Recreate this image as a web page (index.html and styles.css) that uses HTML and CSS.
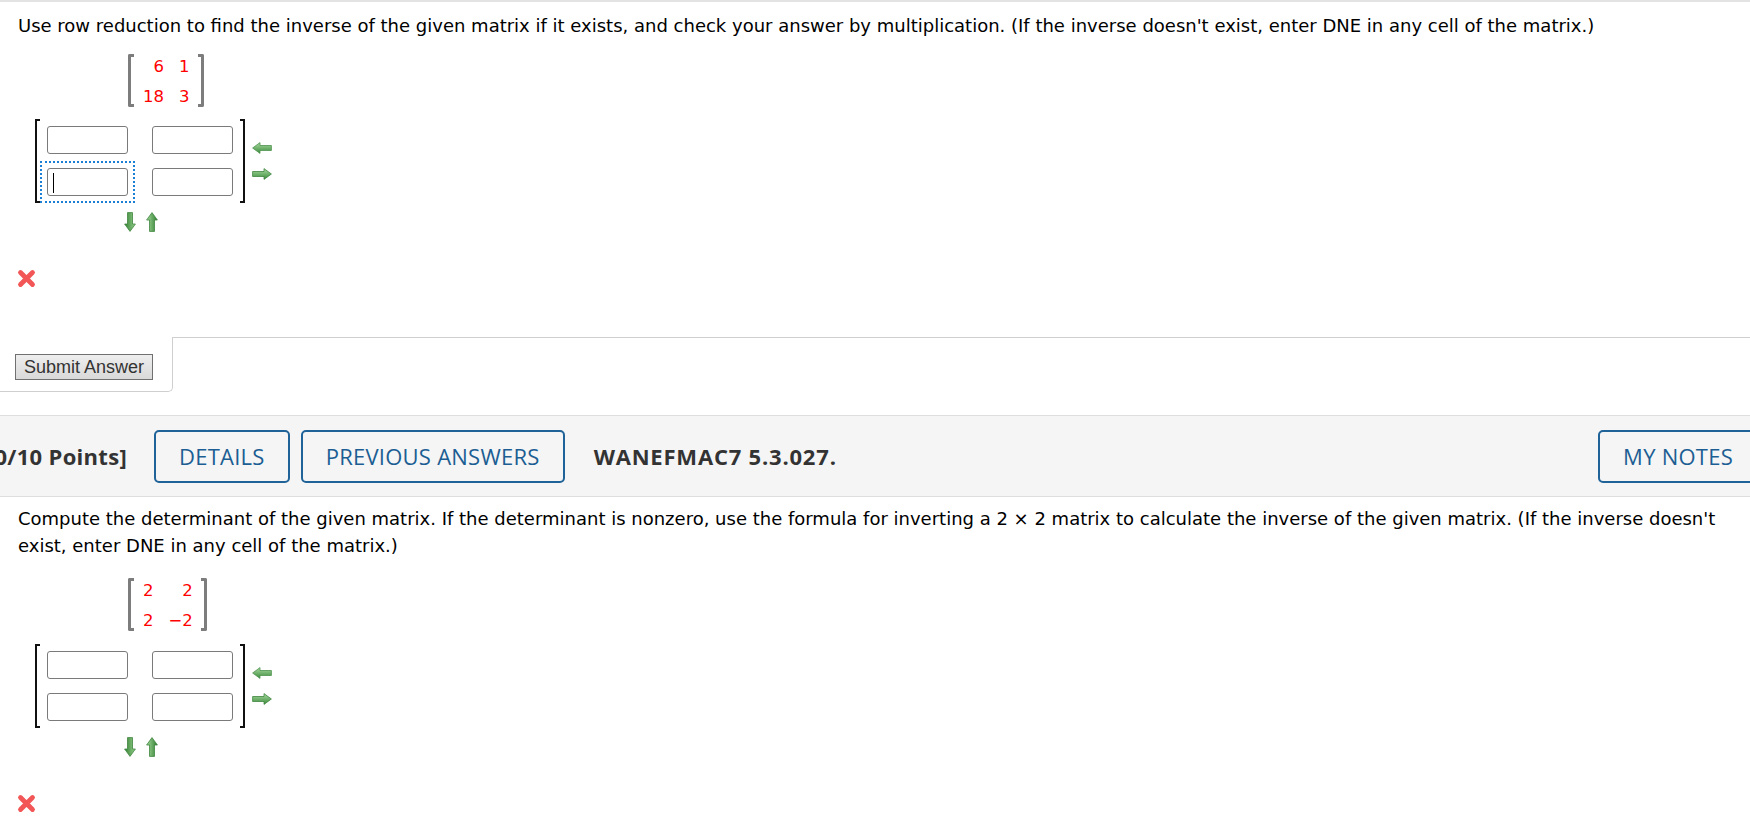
FILE: index.html
```html
<!DOCTYPE html>
<html lang="en">
<head>
  <meta charset="UTF-8" />
  <title>WebAssign – Matrix Inverses</title>
  <link rel="stylesheet" href="styles.css">
</head>
<body>
  <svg class="defs" aria-hidden="true">
    <defs>
      <linearGradient id="gv" x1="0" y1="0" x2="0" y2="1">
        <stop offset="0" stop-color="#a9dba1"/>
        <stop offset="1" stop-color="#3b8b3b"/>
      </linearGradient>
      <linearGradient id="gdown" x1="0" y1="0" x2="1" y2="0">
        <stop offset="0" stop-color="#327f32"/>
        <stop offset="1" stop-color="#98d28f"/>
      </linearGradient>
      <linearGradient id="gup" x1="0" y1="0" x2="1" y2="0">
        <stop offset="0" stop-color="#a2d899"/>
        <stop offset="1" stop-color="#327f32"/>
      </linearGradient>
    </defs>
  </svg>

  <div class="topline"></div>

  <section class="question">
    <p class="prompt">Use row reduction to find the inverse of the given matrix if it exists, and check your answer by multiplication. (If the inverse doesn't exist, enter DNE in any cell of the matrix.)</p>

    <div class="given">
      <span class="br"></span>
      <div class="vals">
        <span>6</span><span>1</span>
        <span>18</span><span>3</span>
      </div>
      <span class="br r"></span>
    </div>

    <div class="answer-row">
      <div class="answer">
        <span class="abr"></span>
        <div class="cells">
          <div class="cell"><input type="text"></div>
          <div class="cell"><input type="text"></div>
          <div class="cell focus"><input type="text"><span class="caret"></span></div>
          <div class="cell"><input type="text"></div>
        </div>
        <span class="abr r"></span>
      </div>
      <div class="row-arrows">
        <svg width="20" height="12" viewBox="0 0 20 12"><path d="M0.6 6 L8 0.6 V3.5 H19.4 V8.5 H8 V11.4 Z" fill="url(#gv)" stroke="#4f934f" stroke-width="0.8"/></svg>
        <svg width="20" height="12" viewBox="0 0 20 12"><path d="M19.4 6 L12 0.6 V3.5 H0.6 V8.5 H12 V11.4 Z" fill="url(#gv)" stroke="#3f853f" stroke-width="0.8"/></svg>
      </div>
    </div>

    <div class="col-arrows">
      <svg width="12" height="20" viewBox="0 0 12 20"><path d="M3.5 0.6 H8.5 V12 H11.4 L6 19.4 L0.6 12 H3.5 Z" fill="url(#gdown)" stroke="#3f853f" stroke-width="0.8"/></svg>
      <svg width="12" height="20" viewBox="0 0 12 20"><path d="M3.5 19.4 H8.5 V8 H11.4 L6 0.6 L0.6 8 H3.5 Z" fill="url(#gup)" stroke="#3f853f" stroke-width="0.8"/></svg>
    </div>

    <div class="mark">
      <svg width="19" height="19" viewBox="0 0 19 19"><path d="M3.5 3.5 L15.5 15.5 M15.5 3.5 L3.5 15.5" stroke="#f25656" stroke-width="4.8" stroke-linecap="round"/></svg>
    </div>
  </section>

  <div class="submit-row">
    <div class="submit-box"><button class="submit">Submit Answer</button></div>
    <div class="submit-fill"></div>
  </div>

  <div class="qheader">
    <div class="points"><span>[0/10 Points]</span></div>
    <button class="hbtn first">DETAILS</button>
    <button class="hbtn">PREVIOUS ANSWERS</button>
    <span class="code">WANEFMAC7 5.3.027.</span>
    <button class="hbtn notes">MY NOTES</button>
  </div>

  <section class="question q2">
    <p class="prompt">Compute the determinant of the given matrix. If the determinant is nonzero, use the formula for inverting a 2 × 2 matrix to calculate the inverse of the given matrix. (If the inverse doesn't exist, enter DNE in any cell of the matrix.)</p>

    <div class="given">
      <span class="br"></span>
      <div class="vals">
        <span>2</span><span>2</span>
        <span>2</span><span>−2</span>
      </div>
      <span class="br r"></span>
    </div>

    <div class="answer-row">
      <div class="answer">
        <span class="abr"></span>
        <div class="cells">
          <div class="cell"><input type="text"></div>
          <div class="cell"><input type="text"></div>
          <div class="cell"><input type="text"></div>
          <div class="cell"><input type="text"></div>
        </div>
        <span class="abr r"></span>
      </div>
      <div class="row-arrows">
        <svg width="20" height="12" viewBox="0 0 20 12"><path d="M0.6 6 L8 0.6 V3.5 H19.4 V8.5 H8 V11.4 Z" fill="url(#gv)" stroke="#4f934f" stroke-width="0.8"/></svg>
        <svg width="20" height="12" viewBox="0 0 20 12"><path d="M19.4 6 L12 0.6 V3.5 H0.6 V8.5 H12 V11.4 Z" fill="url(#gv)" stroke="#3f853f" stroke-width="0.8"/></svg>
      </div>
    </div>

    <div class="col-arrows">
      <svg width="12" height="20" viewBox="0 0 12 20"><path d="M3.5 0.6 H8.5 V12 H11.4 L6 19.4 L0.6 12 H3.5 Z" fill="url(#gdown)" stroke="#3f853f" stroke-width="0.8"/></svg>
      <svg width="12" height="20" viewBox="0 0 12 20"><path d="M3.5 19.4 H8.5 V8 H11.4 L6 0.6 L0.6 8 H3.5 Z" fill="url(#gup)" stroke="#3f853f" stroke-width="0.8"/></svg>
    </div>

    <div class="mark">
      <svg width="19" height="19" viewBox="0 0 19 19"><path d="M3.5 3.5 L15.5 15.5 M15.5 3.5 L3.5 15.5" stroke="#f25656" stroke-width="4.8" stroke-linecap="round"/></svg>
    </div>
  </section>
</body>
</html>
```

FILE: styles.css
```css
html {
  overflow: hidden;
}
body {
  margin: 0;
  font-family: Verdana, "DejaVu Sans", sans-serif;
  color: #000;
  background: #fff;
}
.defs {
  display: block;
  width: 0;
  height: 0;
}
.topline {
  height: 2px;
  background: #e3e3e3;
}
.prompt {
  margin: 10px 0 0;
  padding: 0 18px;
  font-size: 18px;
  line-height: 27px;
}
.q2 .prompt {
  margin-top: 8px;
}

/* given matrix */
.given {
  display: flex;
  width: max-content;
  height: 53px;
  margin: 15px 0 0 128px;
}
.q2 .given {
  margin-top: 19px;
}
.given .br {
  width: 3px;
  border: 3px solid #7d7d7d;
  border-right: 0;
  border-radius: 2px 0 0 2px;
}
.given .br.r {
  border-left: 0;
  border-right: 3px solid #7d7d7d;
  border-radius: 0 2px 2px 0;
}
.vals {
  display: grid;
  grid-template-columns: auto auto;
  column-gap: 15px;
  row-gap: 10px;
  justify-items: end;
  align-content: start;
  padding: 3px 8px 0 9px;
  font-size: 16.5px;
  line-height: 20px;
  color: #f00;
}

/* answer matrix */
.answer-row {
  display: flex;
  align-items: center;
  margin: 12px 0 0 35px;
}
.q2 .answer-row {
  margin-top: 13px;
}
.answer {
  display: flex;
}
.abr {
  width: 3px;
  border: 2px solid #111;
  border-right: 0;
}
.abr.r {
  border-left: 0;
  border-right: 2px solid #111;
}
.cells {
  display: grid;
  grid-template-columns: auto auto;
  column-gap: 10px;
}
.cell {
  position: relative;
  padding: 7px;
}
.cell input {
  display: block;
  box-sizing: border-box;
  width: 81px;
  height: 28px;
  margin: 0;
  padding: 0 4px;
  border: 1px solid #7a7a7a;
  border-radius: 3px;
  background: #fff;
  font: inherit;
  outline: none;
}
.cell.focus {
  outline: 2px dotted #1b7fd6;
  outline-offset: -2px;
}
.caret {
  position: absolute;
  left: 13px;
  top: 12px;
  width: 1px;
  height: 20px;
  background: #000;
}
.row-arrows {
  display: flex;
  flex-direction: column;
  gap: 14px;
  margin-left: 7px;
}
.row-arrows svg,
.col-arrows svg,
.mark svg {
  display: block;
}
.col-arrows {
  display: flex;
  gap: 10px;
  margin: 9px 0 0 124px;
}
.mark {
  width: 19px;
  margin: 37px 0 0 17px;
}

/* submit tab */
.submit-row {
  display: flex;
  margin-top: 49px;
}
.submit-box {
  width: 157px;
  padding: 17px 0 11px 15px;
  border-right: 1px solid #cfcfcf;
  border-bottom: 1px solid #cfcfcf;
  border-bottom-right-radius: 5px;
}
.submit-fill {
  flex: 1;
  border-top: 1px solid #cfcfcf;
}
.submit {
  display: block;
  height: 26px;
  padding: 0 8px;
  border: 1px solid #707070;
  border-radius: 0;
  background: linear-gradient(#eeeeee, #d9d9d9);
  color: #333;
  font: 18px "Liberation Sans", Arial, sans-serif;
  white-space: nowrap;
}

/* question header */
.qheader {
  display: flex;
  align-items: center;
  height: 80px;
  margin: 23px -8px 0 0;
  background: #f5f5f5;
  border-top: 1px solid #dedede;
  border-bottom: 1px solid #dedede;
  font-family: "Open Sans", sans-serif;
  font-size: 22px;
}
.points {
  display: flex;
  justify-content: flex-end;
  width: 127px;
  flex-shrink: 0;
  white-space: nowrap;
  font-weight: 700;
  letter-spacing: 0.3px;
  color: #333;
}
.hbtn {
  height: 53px;
  box-sizing: border-box;
  margin-left: 11px;
  padding: 0 23px;
  border: 2px solid #1f6398;
  border-radius: 5px;
  background: transparent;
  color: #1c5e93;
  font: inherit;
  letter-spacing: 0.25px;
  white-space: nowrap;
}
.hbtn.first {
  margin-left: 27px;
}
.code {
  margin-left: 29px;
  font-weight: 700;
  letter-spacing: 0.8px;
  color: #333;
  white-space: nowrap;
}
.hbtn.notes {
  margin-left: auto;
}
```
